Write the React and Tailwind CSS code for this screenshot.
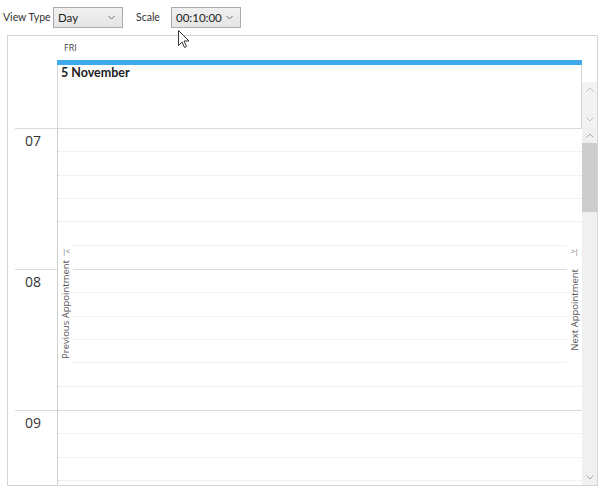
import React from 'react';

const font = { fontFamily: '"Open Sans", "Noto Sans", sans-serif' };
const narrow = { fontFamily: 'Lato, "Open Sans", sans-serif' };

const Combo = ({ value }) => (
  <div className="w-[70px] h-[21px] border border-[#acacac] bg-gradient-to-b from-[#f0f0f0] to-[#e5e5e5] flex items-center pl-[4px] pr-[7px] text-[11.5px] text-[#222]">
    <span className="flex-1">{value}</span>
    <svg width="7" height="5" viewBox="0 0 7 5" className="mb-[1px]">
      <path d="M0.5 1 L3.5 4 L6.5 1" fill="none" stroke="#707070" strokeWidth="1" />
    </svg>
  </div>
);

const Chevron = ({ up, color = '#c2c2c2' }) => (
  <svg width="8" height="5" viewBox="0 0 8 5">
    <path d={up ? 'M0.5 4.5 L4 1 L7.5 4.5' : 'M0.5 0.5 L4 4 L7.5 0.5'} fill="none" stroke={color} strokeWidth="1" />
  </svg>
);

const hours = ['07', '08', '09'];

const HourRow = () => (
  <div className="h-[141px] border-t border-[#dadada] flex flex-col">
    {[0, 1, 2, 3, 4, 5].map((i) => (
      <div key={i} className={`h-[23.5px] ${i < 5 ? 'border-b border-dotted border-[#e2e2e2]' : ''}`} />
    ))}
  </div>
);

const NavPanel = ({ side, icon, label }) => (
  <div
    className={`absolute top-[115px] w-[15px] h-[133px] bg-white flex items-center justify-center text-[#555] ${side === 'left' ? 'left-0' : 'right-0'}`}
  >
    <span className="absolute top-[3px] left-0 w-full text-center text-[8px] leading-[10px] tracking-[-1px] text-[#777]">{icon}</span>
    <span className="[writing-mode:vertical-rl] rotate-180 text-[9.5px] leading-[12px] whitespace-nowrap">{label}</span>
  </div>
);

export default function App() {
  return (
    <div className="relative w-[600px] h-[486px] bg-white overflow-hidden text-[#333]" style={font}>
      {/* toolbar */}
      <div className="h-[35px] flex items-center pl-[3px] text-[10.5px]" style={narrow}>
        <span className="w-[50px] whitespace-nowrap">View Type</span>
        <Combo value="Day" />
        <span className="ml-[13px] w-[35px]">Scale</span>
        <Combo value="00:10:00" />
      </div>

      {/* scheduler */}
      <div className="ml-[7px] w-[591px] h-[451px] border border-[#d4d4d4] flex flex-col">
        {/* header */}
        <div className="h-[92px] flex">
          <div className="w-[49px]" />
          <div className="w-[525px] flex flex-col">
            <div className="h-[24px] pl-[7px] pt-[6px] text-[9px] leading-[12px] text-[#444]">FRI</div>
            <div className="h-[5px] bg-[#3fa9ee]" />
            <div className="flex-1 border-l border-r border-[#d6d6d6] pl-[3px] pt-[1px] text-[12.5px] leading-[14px] font-bold text-[#222]" style={narrow}>
              5 November
            </div>
          </div>
          <div className="w-[15px] flex flex-col">
            <div className="h-[46px]" />
            <div className="h-[46px] bg-[#f2f2f2] flex flex-col items-center justify-between pt-[5px] pb-[6px]">
              <Chevron up />
              <Chevron />
            </div>
          </div>
        </div>

        {/* body */}
        <div className="flex-1 flex overflow-hidden">
          <div className="w-[49px] overflow-hidden">
            {hours.map((h) => (
              <div key={h} className="h-[141px] ml-[7px] border-t border-[#dadada] pl-[10px] pt-[2px] text-[14px] leading-[19px] text-[#333]">
                {h}
              </div>
            ))}
          </div>
          <div className="relative w-[525px] border-l border-[#cfcfcf] overflow-hidden">
            {hours.map((h) => (
              <HourRow key={h} />
            ))}
            <NavPanel side="left" icon="|<" label="Previous Appointment" />
            <NavPanel side="right" icon=">|" label="Next Appointment" />
          </div>
          <div className="w-[15px] bg-[#f0f0f0] flex flex-col">
            <div className="h-[15px] flex items-center justify-center">
              <Chevron up color="#a8a8a8" />
            </div>
            <div className="h-[69px] bg-[#cdcdcd]" />
            <div className="flex-1" />
            <div className="h-[15px] flex items-center justify-center">
              <Chevron color="#a8a8a8" />
            </div>
          </div>
        </div>
      </div>

      {/* mouse pointer */}
      <svg className="absolute left-[178px] top-[30px]" width="13" height="19" viewBox="0 0 13 19">
        <path d="M0.5 0.5 L0.5 15.5 L4 12 L6.5 17.5 L8.5 16.5 L6 11 L11 11 Z" fill="#fff" stroke="#333" strokeWidth="1" strokeLinejoin="round" />
      </svg>
    </div>
  );
}
